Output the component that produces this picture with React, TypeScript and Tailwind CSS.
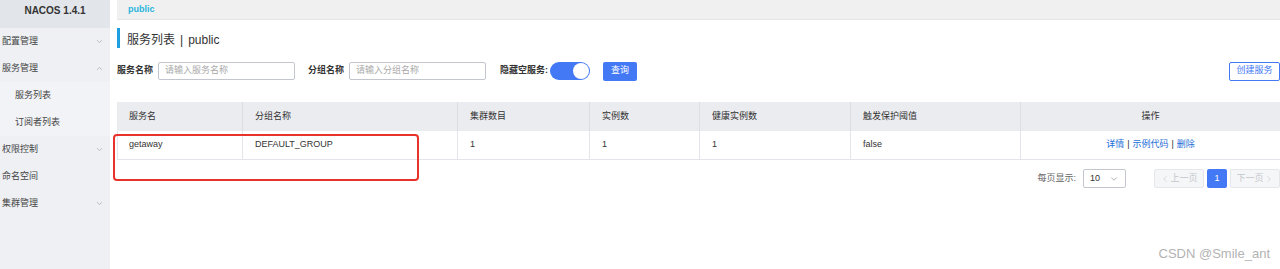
import { ChevronDown, ChevronUp, ChevronLeft, ChevronRight } from "lucide-react";

const font = { fontFamily: '"Liberation Sans", "Noto Sans CJK SC", sans-serif' };

const menu = [
  { label: "配置管理", arrow: "down" },
  { label: "服务管理", arrow: "up" },
  { label: "服务列表", sub: true },
  { label: "订阅者列表", sub: true },
  { label: "权限控制", arrow: "down" },
  { label: "命名空间" },
  { label: "集群管理", arrow: "down" },
];

const columns = [
  { title: "服务名", w: "w-[126px]" },
  { title: "分组名称", w: "w-[215px]" },
  { title: "集群数目", w: "w-[132px]" },
  { title: "实例数", w: "w-[110px]" },
  { title: "健康实例数", w: "w-[151px]" },
  { title: "触发保护阈值", w: "w-[170px]" },
];

const row = ["getaway", "DEFAULT_GROUP", "1", "1", "1", "false"];

function Sidebar() {
  return (
    <div className="w-[110px] shrink-0 bg-[#eef0f4] min-h-[269px] flex flex-col">
      <div className="h-[28px] bg-[#e2e5ea] flex justify-center pt-[3px] text-[10px] font-bold text-[#333]">
        NACOS 1.4.1
      </div>
      {menu.map((m) => (
        <div
          key={m.label}
          className={`h-[27px] flex items-center justify-between text-[9px] text-[#444] ${
            m.sub ? "pl-[15px] bg-[#f2f3f6]" : "pl-[2px] pr-[6px]"
          }`}
        >
          <span>{m.label}</span>
          {m.arrow === "down" && <ChevronDown className="w-[9px] h-[9px] text-[#999]" strokeWidth={1.5} />}
          {m.arrow === "up" && <ChevronUp className="w-[9px] h-[9px] text-[#999]" strokeWidth={1.5} />}
        </div>
      ))}
    </div>
  );
}

export default function App() {
  return (
    <div className="w-[1280px] h-[269px] overflow-hidden flex bg-white relative" style={font}>
      <Sidebar />
      <div className="flex-1 pl-[7px] flex flex-col">
        <div className="h-[20px] bg-[#f0f0f0] border-b border-[#e4e4e4] flex items-center pl-[11px] text-[9px] font-bold text-[#2bb5dd]">
          public
        </div>

        <div className="mt-[8px] h-[20px] border-l-[3px] border-[#1e9fe0] flex items-center pl-[7px] pt-[3px] text-[12px] text-[#333]">
          服务列表 <span className="mx-[5px]">|</span> public
        </div>

        <div className="mt-[14px] h-[18px] flex items-center text-[9px] text-[#333]">
          <span className="font-semibold w-[41px]">服务名称</span>
          <div className="w-[137px] h-[18px] border border-[#c4c6cf] rounded-[2px] flex items-center pl-[6px] text-[#aaa]">
            请输入服务名称
          </div>
          <span className="font-semibold ml-[13px] w-[41px]">分组名称</span>
          <div className="w-[137px] h-[18px] border border-[#c4c6cf] rounded-[2px] flex items-center pl-[6px] text-[#aaa]">
            请输入分组名称
          </div>
          <span className="font-semibold ml-[14px] w-[50px]">隐藏空服务:</span>
          <div className="w-[40px] h-[18px] rounded-full bg-[#4479f5] flex items-center justify-end pr-[1px]">
            <div className="w-[16px] h-[16px] rounded-full bg-white" />
          </div>
          <div className="ml-[13px] w-[34px] h-[19px] bg-[#4479f5] rounded-[2px] text-white flex items-center justify-center">
            查询
          </div>
          <div className="ml-auto w-[51px] h-[19px] border border-[#4479f5] rounded-[2px] text-[#4479f5] flex items-center justify-center">
            创建服务
          </div>
        </div>

        <div className="mt-[22px] border-b border-[#e3e5ea] text-[9px]">
          <div className="flex h-[29px] bg-[#ebecf0] text-[#333]">
            {columns.map((c) => (
              <div key={c.title} className={`${c.w} border-r border-[#dcdee3] flex items-center pl-[12px]`}>
                {c.title}
              </div>
            ))}
            <div className="flex-1 flex items-center justify-center">操作</div>
          </div>
          <div className="flex h-[28px] text-[#333] border-l border-[#e3e5ea]">
            {row.map((v, i) => (
              <div key={i} className={`${columns[i].w} border-r border-[#e3e5ea] flex items-center pl-[12px] ${i === 0 ? "-ml-px" : ""}`}>
                {v}
              </div>
            ))}
            <div className="flex-1 flex items-center justify-center text-[#1d6ed8]">
              详情 <span className="mx-[3px] text-[#333]">|</span> 示例代码 <span className="mx-[3px] text-[#333]">|</span> 删除
            </div>
          </div>
        </div>

        <div className="mt-[9px] flex items-center justify-end text-[9px] text-[#666]">
          <span>每页显示:</span>
          <div className="ml-[7px] w-[43px] h-[19px] border border-[#c4c6cf] rounded-[2px] flex items-center justify-between px-[6px] text-[#333]">
            10
            <ChevronDown className="w-[10px] h-[10px] text-[#888]" strokeWidth={1.5} />
          </div>
          <div className="ml-[28px] w-[50px] h-[19px] border border-[#e6e7eb] bg-[#f5f6f8] rounded-[2px] flex items-center justify-center text-[#c4c6cc]">
            <ChevronLeft className="w-[10px] h-[10px]" strokeWidth={1.5} />
            上一页
          </div>
          <div className="ml-[3px] w-[20px] h-[19px] bg-[#4479f5] rounded-[2px] text-white flex items-center justify-center">
            1
          </div>
          <div className="ml-[3px] w-[50px] h-[19px] border border-[#e6e7eb] bg-[#f5f6f8] rounded-[2px] flex items-center justify-center text-[#c4c6cc]">
            下一页
            <ChevronRight className="w-[10px] h-[10px]" strokeWidth={1.5} />
          </div>
        </div>
      </div>

      <div className="absolute left-[113px] top-[134px] w-[306px] h-[47px] border-2 border-[#e8332b] rounded-[4px]" />
      <div className="absolute right-[10px] top-[244px] text-[13px] text-[#b3b3b3]">CSDN @Smile_ant</div>
    </div>
  );
}
